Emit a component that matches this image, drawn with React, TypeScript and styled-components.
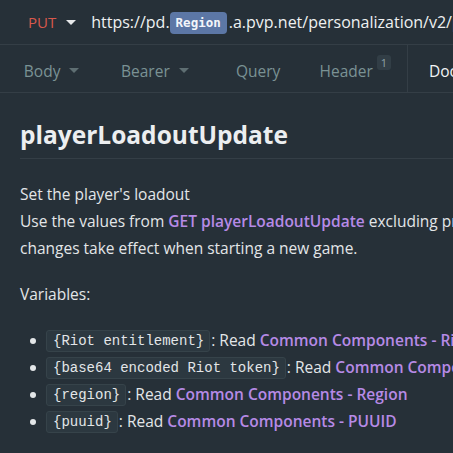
import React from "react";
import styled, { createGlobalStyle } from "styled-components";

const GlobalStyle = createGlobalStyle`
  html, body {
    margin: 0;
    padding: 0;
    background: #263038;
    overflow: hidden;
  }
  body {
    font-family: "Open Sans", "Noto Sans", sans-serif;
    color: #e3e6e8;
  }
`;

const Page = styled.div`
  width: 453px;
  height: 453px;
  overflow: hidden;
  background: #263038;
`;

/* 상단 URL 바 */
const UrlBar = styled.div`
  height: 45px;
  display: flex;
  align-items: center;
  padding-left: 28px;
  border-bottom: 1px solid #343e46;
  white-space: nowrap;
  box-sizing: border-box;
`;

const Method = styled.span`
  color: #d9584c;
  font-size: 15px;
  margin-right: 10px;
`;

const Caret = styled.span<{ $color?: string }>`
  display: inline-block;
  width: 0;
  height: 0;
  border-left: 5px solid transparent;
  border-right: 5px solid transparent;
  border-top: 5px solid ${(p) => p.$color || "#e6e8ea"};
  margin-left: ${(p) => (p.$color ? "9px" : "0")};
`;

const Url = styled.span`
  margin-left: 15px;
  color: #eef0f1;
  font-size: 16px;
  display: flex;
  align-items: center;
`;

const RegionTag = styled.span`
  display: inline-block;
  background: #5c77a6;
  color: #f2f5fa;
  font-family: "DejaVu Sans Mono", monospace;
  font-size: 12.5px;
  font-weight: bold;
  padding: 3px 6px;
  border-radius: 4px;
  margin: 1px 2px 0 0;
  line-height: 16px;
`;

/* 탭 */
const TabBar = styled.div`
  height: 48px;
  display: flex;
  border-bottom: 1px solid #343e46;
  box-sizing: border-box;
`;

const TabGroup = styled.div`
  width: 407px;
  flex-shrink: 0;
  display: flex;
  border-right: 1px solid #343e46;
`;

const Tab = styled.div<{ $shift?: number }>`
  flex: 1;
  display: flex;
  align-items: center;
  justify-content: center;
  padding: 4px 0 0;
  margin-left: ${(p) => p.$shift || 0}px;
  color: #7a9294;
  font-size: 15.5px;
  white-space: nowrap;
`;

const Badge = styled.sup`
  display: inline-block;
  background: #323e46;
  color: #8fa2a6;
  font-size: 11px;
  line-height: 15px;
  padding: 0 4px;
  border-radius: 3px;
  margin-left: 4px;
  align-self: flex-start;
  margin-top: 6px;
`;

const ActiveTab = styled.div`
  padding: 4px 0 0 21px;
  display: flex;
  align-items: center;
  color: #f2f4f5;
  font-size: 15.5px;
  white-space: nowrap;
`;

/* 문서 영역 */
const Doc = styled.div`
  padding: 0 0 0 20px;
  white-space: nowrap;
`;

const Title = styled.h1`
  margin: 0;
  padding: 27px 0 8px;
  font-size: 24.5px;
  font-weight: 700;
  color: #eceef0;
  border-bottom: 1px solid #343e46;
  line-height: 30px;
`;

const Para = styled.p<{ $gap: number }>`
  margin: ${(p) => p.$gap}px 0 0;
  font-size: 15.5px;
  line-height: 27px;
  color: #e3e6e8;
`;

const Link = styled.a`
  color: #b68ae6;
  font-weight: 600;
  text-decoration: none;
`;

const List = styled.ul`
  margin: 19px 0 0;
  padding: 0 0 0 26px;
  list-style: none;
`;

const Item = styled.li`
  position: relative;
  height: 27px;
  font-size: 15.5px;
  line-height: 27px;
  color: #e3e6e8;

  &::before {
    content: "";
    position: absolute;
    left: -16px;
    top: 11px;
    width: 6px;
    height: 6px;
    border-radius: 50%;
    background: #e3e6e8;
  }
`;

const Code = styled.code`
  display: inline-block;
  font-family: "Liberation Mono", "DejaVu Sans Mono", monospace;
  font-size: 14px;
  line-height: 18px;
  vertical-align: 1px;
  background: #2c3840;
  border: 1px solid #36434a;
  border-radius: 3px;
  padding: 1px 5px 1px 6px;
  margin-right: 1px;
  color: #e3e6e8;
`;

const vars = [
  { code: "{Riot entitlement}", target: "Riot Entitlement" },
  { code: "{base64 encoded Riot token}", target: "Client Platform" },
  { code: "{region}", target: "Region" },
  { code: "{puuid}", target: "PUUID" },
];

export default function App() {
  return (
    <Page>
      <GlobalStyle />
      <UrlBar>
        <Method>PUT</Method>
        <Caret />
        <Url>
          https://pd.<RegionTag>Region</RegionTag>.a.pvp.net/personalization/v2/players/
        </Url>
      </UrlBar>
      <TabBar>
        <TabGroup>
          <Tab>
            Body <Caret $color="#5e6e72" />
          </Tab>
          <Tab>
            Bearer <Caret $color="#5e6e72" />
          </Tab>
          <Tab>Query</Tab>
          <Tab $shift={-6}>
            Header <Badge>1</Badge>
          </Tab>
        </TabGroup>
        <ActiveTab>Docs</ActiveTab>
      </TabBar>
      <Doc>
        <Title>playerLoadoutUpdate</Title>
        <Para $gap={22}>
          Set the player's loadout
          <br />
          Use the values from <Link>GET playerLoadoutUpdate</Link> excluding properties
          <br />
          changes take effect when starting a new game.
        </Para>
        <Para $gap={19}>Variables:</Para>
        <List>
          {vars.map((v) => (
            <Item key={v.code}>
              <Code>{v.code}</Code>: Read <Link>Common Components - {v.target}</Link>
            </Item>
          ))}
        </List>
      </Doc>
    </Page>
  );
}
